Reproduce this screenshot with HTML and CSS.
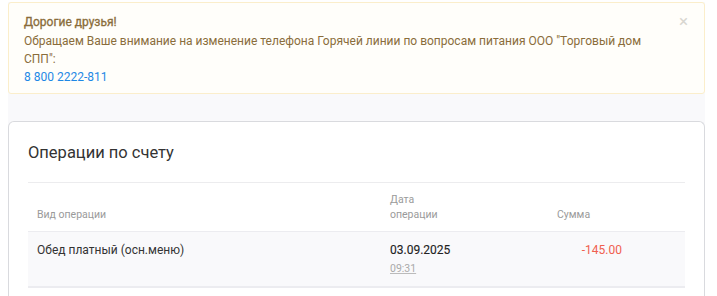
FILE: index.html
```html
<!DOCTYPE html>
<html lang="ru">
<head>
<meta charset="utf-8">
<link rel="stylesheet" href="styles.css">
</head>
<body>
<div class="page">
  <div class="alert">
    <span class="alert-close">×</span>
    <div class="alert-title">Дорогие друзья!</div>
    <div class="alert-text">Обращаем Ваше внимание на изменение телефона Горячей линии по вопросам питания ООО "Торговый дом СПП":</div>
    <a class="alert-link" href="#">8 800 2222-811</a>
  </div>
  <div class="card">
    <h2 class="card-title">Операции по счету</h2>
    <table class="ops">
      <thead>
        <tr>
          <th class="c-type">Вид операции</th>
          <th class="c-date">Дата<br>операции</th>
          <th class="c-sum">Сумма</th>
          <th class="c-rest"></th>
        </tr>
      </thead>
      <tbody>
        <tr>
          <td class="c-type">Обед платный (осн.меню)</td>
          <td class="c-date"><div class="date">03.09.2025</div><div class="time">09:31</div></td>
          <td class="c-sum"><span class="neg">-145.00</span></td>
          <td class="c-rest"></td>
        </tr>
      </tbody>
    </table>
  </div>
</div>
</body>
</html>
```
FILE: styles.css
```css
html, body {
  margin: 0;
  padding: 0;
  background: #fff;
}
body {
  padding: 2px 12px 0 8px;
  font-family: Roboto, "Noto Sans", sans-serif;
  font-size: 12px;
  color: #333;
}
.page {
  background: #f9f9fb;
}
.alert {
  position: relative;
  background: #fffefa;
  border: 1px solid #fbeecb;
  border-radius: 3px;
  padding: 10px 15px 10px 15px;
  color: #8a6d3b;
  line-height: 18px;
  height: 70px;
}
.alert-title {
  font-weight: 400;
  -webkit-text-stroke: 0.3px #8a6d3b;
  margin-bottom: 1px;
}
.alert-text {
  padding-right: 40px;
}
.alert-link {
  color: #1e88e5;
  text-decoration: none;
}
.alert-close {
  position: absolute;
  right: 16px;
  top: 9px;
  font-size: 17px;
  color: #d8d6d0;
  line-height: 18px;
}
.card {
  margin-top: 27px;
  background: #fff;
  border: 1px solid #d9dade;
  border-bottom: none;
  border-radius: 6px 6px 0 0;
  padding: 19px 19px 10px 19px;
  height: 160px;
}
.card-title {
  margin: 0;
  font-size: 16.5px;
  font-weight: 400;
  color: #333;
  line-height: 24px;
  padding: 0 0 17px 0;
  border-bottom: 1px solid #ececee;
}
.ops {
  width: 100%;
  border-collapse: collapse;
  table-layout: fixed;
}
.ops th {
  font-size: 10.5px;
  font-weight: 400;
  color: #9a9a9a;
  text-align: left;
  line-height: 15px;
  padding: 9px 9px 9px 9px;
  vertical-align: bottom;
  border-bottom: 1px solid #ececf0;
}
.ops td {
  background: #f9f9fb;
  vertical-align: top;
  padding: 9px 9px 9px 9px;
  border-bottom: 2px solid #ececf0;
  line-height: 18px;
  height: 36px;
}
.c-type { width: 335px; }
.c-date { width: 149px; }
.c-sum { width: 82px; }
.ops td.c-sum { text-align: right; padding-right: 26px; }
.date {
  font-weight: 400;
  -webkit-text-stroke: 0.12px #222;
  color: #222;
  font-size: 12px;
}
.time {
  font-size: 10.5px;
  color: #aaa;
  text-decoration: underline;
  text-decoration-color: #bbb;
  line-height: 16px;
  margin-top: 2px;
}
.neg {
  color: #f0604f;
  font-size: 12px;
}
```
